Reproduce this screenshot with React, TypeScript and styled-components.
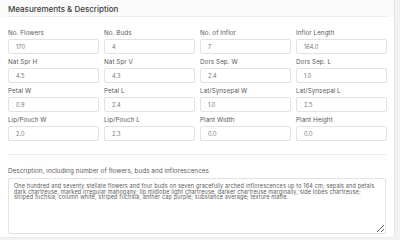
import React from "react";
import styled, { createGlobalStyle } from "styled-components";

const fields = [
  { label: "No. Flowers", value: "170" },
  { label: "No. Buds", value: "4" },
  { label: "No. of Inflor", value: "7" },
  { label: "Inflor Length", value: "164.0" },
  { label: "Nat Spr H", value: "4.5" },
  { label: "Nat Spr V", value: "4.3" },
  { label: "Dors Sep. W", value: "2.4" },
  { label: "Dors Sep. L", value: "1.0" },
  { label: "Petal W", value: "0.9" },
  { label: "Petal L", value: "2.4" },
  { label: "Lat/Synsepal W", value: "1.0" },
  { label: "Lat/Synsepal L", value: "2.5" },
  { label: "Lip/Pouch W", value: "2.0" },
  { label: "Lip/Pouch L", value: "2.3" },
  { label: "Plant Width", value: "0.0" },
  { label: "Plant Height", value: "0.0" },
];

const description =
  "One hundred and seventy stellate flowers and four buds on seven gracefully arched inflorescences up to 164 cm; sepals and petals dark chartreuse, marked irregular mahogany; lip midlobe light chartreuse, darker chartreuse marginally, side lobes chartreuse; striped fuchsia; column white, striped fuchsia, anther cap purple; substance average; texture matte.";

const App = () => {
  return (
    <>
      <GlobalStyle />
      <Page>
        <Card>
          <CardHeader>
            <Title>Measurements &amp; Description</Title>
          </CardHeader>
          <FieldGrid>
            {fields.map((field) => (
              <Field key={field.label}>
                <Label>{field.label}</Label>
                <Input readOnly value={field.value} />
              </Field>
            ))}
          </FieldGrid>
          <DescriptionWrap>
            <Label>
              Description, including number of flowers, buds and
              inflorescences
            </Label>
            <TextArea readOnly value={description} />
          </DescriptionWrap>
        </Card>
      </Page>
    </>
  );
};

const GlobalStyle = createGlobalStyle`
  html, body {
    margin: 0;
    padding: 0;
    background: #f2f2f2;
    font-family: Inter, "Noto Sans", sans-serif;
  }
`;

const Page = styled.div`
  width: 400px;
  height: 240px;
  overflow: hidden;
  display: flex;
`;

const Card = styled.div`
  width: 395px;
  height: 238px;
  background: #fff;
  border-right: 1px solid #e4e4e4;
  border-bottom: 1px solid #ececec;
  box-sizing: border-box;
  display: flex;
  flex-direction: column;
`;

const CardHeader = styled.div`
  background: #fafafa;
  padding: 0 8px;
`;

const Title = styled.div`
  height: 17px;
  line-height: 19px;
  font-size: 8px;
  font-weight: 500;
  color: #3a3a3a;
  border-bottom: 1px solid #ececec;
  box-sizing: border-box;
`;

const FieldGrid = styled.div`
  display: grid;
  grid-template-columns: repeat(4, 91px);
  column-gap: 5px;
  row-gap: 4px;
  padding: 12px 0 13px;
  margin: 0 8px;
  border-bottom: 1px solid #ececec;
`;

const Field = styled.div`
  display: flex;
  flex-direction: column;
  gap: 2px;
`;

const Label = styled.div`
  font-size: 6.3px;
  line-height: 8px;
  letter-spacing: 0.05px;
  color: #5a5a5a;
  white-space: nowrap;
`;

const Input = styled.input`
  height: 15px;
  box-sizing: border-box;
  border: 1px solid #e2e2e2;
  border-radius: 2px;
  padding: 0 7px;
  font-family: inherit;
  font-size: 5.7px;
  color: #777;
  outline: none;
  background: #fff;
`;

const DescriptionWrap = styled.div`
  display: flex;
  flex-direction: column;
  gap: 3px;
  padding: 12px 8px 0;
`;

const TextArea = styled.textarea`
  height: 56px;
  box-sizing: border-box;
  border: 1px solid #e2e2e2;
  border-radius: 2px;
  padding: 5px 5px;
  font-family: inherit;
  font-size: 5.5px;
  line-height: 5.7px;
  letter-spacing: 0.15px;
  color: #5a5a5a;
  outline: none;
  resize: vertical;
  background: #fff;
`;

export default App;
